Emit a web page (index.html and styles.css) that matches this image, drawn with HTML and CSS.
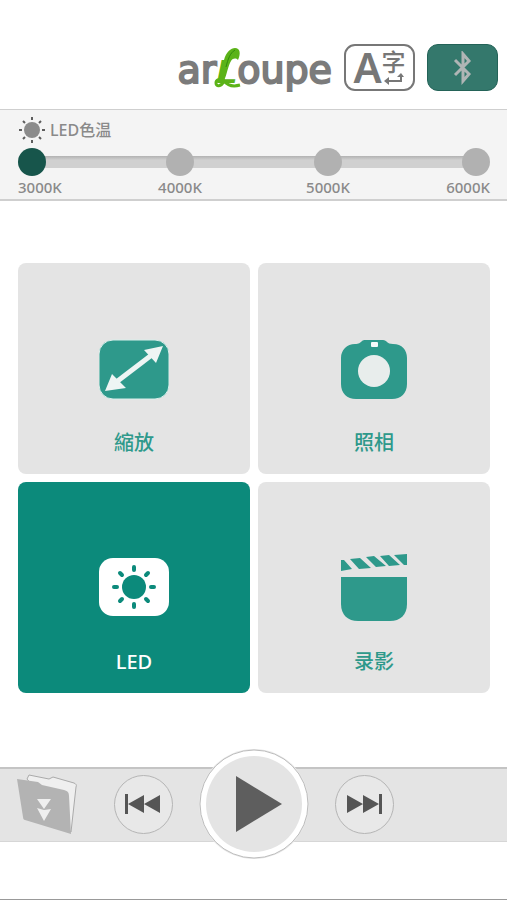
FILE: index.html
```html
<!DOCTYPE html>
<html lang="zh-Hant">
<head>
    <meta charset="UTF-8">
    <meta name="viewport" content="width=device-width, initial-scale=1.0">
    <title>arLoupe</title>
    <link rel="stylesheet" href="styles.css">
</head>
<body>

    <header class="header">
        <div class="logo">
            <span>ar</span><span class="logo__l">L<svg class="logo__leaf" viewBox="0 0 28 42" aria-hidden="true">
                <path d="M5 34C8 26 8 20 10 13 12 5 17 1 21 1c5 0 6 5 3 12-2-2-5-2-7 1-3 5-4 13-7 20z" fill="#5bb318"/>
                <path d="M12 20C14 12 16 6 21 3" fill="none" stroke="#2f8a0c" stroke-width="1"/>
                <path d="M9 34c-3-3-7-1-7 2 0 4 5 4 8-2 4 5 9 6 16 4" fill="none" stroke="#5bb318" stroke-width="3"/>
            </svg></span><span>oupe</span>
        </div>
        <button class="btn btn--lang" type="button" aria-label="A字">
            <span class="lang__a">A</span>
            <span class="lang__zi">
                <span>字</span>
                <svg width="20" height="12" viewBox="0 0 20 12" aria-hidden="true">
                    <path d="M17 3v5H4" fill="none" stroke="#777" stroke-width="2"/>
                    <path d="M0 8l5-4v8zM13 4l4-4 3 4z" fill="#777"/>
                </svg>
            </span>
        </button>
        <button class="btn btn--bt" type="button" aria-label="Bluetooth">
            <svg width="20" height="34" viewBox="0 0 20 34" aria-hidden="true">
                <path d="M2 9l14 14-6 7V3l6 7L2 24" fill="none" stroke="#b0b5b5" stroke-width="3"/>
            </svg>
        </button>
    </header>

    <fieldset class="temp">
        <div class="temp__title">
            <svg width="28" height="28" viewBox="0 0 28 28" aria-hidden="true">
                <circle cx="14" cy="14" r="8" fill="#8b8b8b"/>
                <path d="M14 1v3M14 24v3M1 14h3M24 14h3M5 5l2 2M21 21l2 2M5 23l2-2M21 7l2-2" stroke="#5d5d5d" stroke-width="2"/>
            </svg>
            <span>LED色温</span>
        </div>
        <div class="temp__stops">
            <label class="stop"><input type="radio" name="temp" value="3000" checked><span>3000K</span></label>
            <label class="stop"><input type="radio" name="temp" value="4000"><span>4000K</span></label>
            <label class="stop"><input type="radio" name="temp" value="5000"><span>5000K</span></label>
            <label class="stop"><input type="radio" name="temp" value="6000"><span>6000K</span></label>
        </div>
    </fieldset>

    <main class="grid">
        <button class="card" type="button">
            <svg class="card__icon" viewBox="0 0 70 70" aria-hidden="true">
                <rect x="0" y="6" width="70" height="59" rx="14" fill="#2e998b" stroke="#d8efeb" stroke-width="1"/>
                <path d="M16 49L54 20" stroke="#eef5f4" stroke-width="5"/>
                <path d="M6 57l7-17 14 14zM64 12L45 16l12 13z" fill="#eef5f4"/>
            </svg>
            <span>縮放</span>
        </button>
        <button class="card" type="button">
            <svg class="card__icon" viewBox="0 0 70 70" aria-hidden="true">
                <path d="M16 10c4 0 5-1 7-3 1-1 2-1 3-1h18c2 0 3 1 4 2 1 1 3 2 6 2 9 0 14 6 14 14v26c0 9-6 15-15 15H17C8 65 2 59 2 50V24c0-8 6-14 14-14z" fill="#2e998b"/>
                <circle cx="35" cy="37" r="16" fill="#e8edec"/>
                <rect x="32" y="8" width="7" height="5" rx="1" fill="#f5fafa"/>
            </svg>
            <span>照相</span>
        </button>
        <button class="card card--active" type="button">
            <svg class="card__icon" viewBox="0 0 70 70" aria-hidden="true">
                <rect x="0" y="5" width="70" height="58" rx="14" fill="#fff"/>
                <circle cx="35" cy="34" r="12" fill="#0c8a7b"/>
                <path d="M35 14v3M35 51v3M15 34h3M52 34h3M21 20l2 2M47 46l2 2M21 48l2-2M47 22l2-2" stroke="#0c8a7b" stroke-width="4" stroke-linecap="round"/>
            </svg>
            <span>LED</span>
        </button>
        <button class="card" type="button">
            <svg class="card__icon" viewBox="0 0 70 70" aria-hidden="true">
                <path d="M2 24h66v27c0 11-7 17-17 17H19C9 68 2 62 2 51z" fill="#2e998b"/>
                <path d="M2 7h3l8 9-11 2zM11 6l10-1 11 10-12 1zM27 4l8-1 12 10-10 1zM41 3l9-1 11 10-11 1zM55 2l13-1v11h-3z" fill="#2e998b"/>
            </svg>
            <span>录影</span>
        </button>
    </main>

    <footer class="player">
        <button class="folder" type="button" aria-label="Folder">
            <svg width="60" height="62" viewBox="0 0 60 62" aria-hidden="true">
                <path d="M10 6l2-4 20 4 4-2 21 6c2 1 3 2 2 4l-5 45z" fill="#efefef" stroke="#aaa" stroke-width="1"/>
                <path d="M0 6l21 3 4 3 22 5c4 1 5 3 5 6l2 38L8 47c-1 0-2-1-2-3z" fill="#b3b3b3"/>
                <path d="M20 26h14l-7 10zM20 35l7 2 7-1-7 12z" fill="#efefef"/>
            </svg>
        </button>
        <div class="player__controls">
            <button class="round" type="button" aria-label="Previous">
                <svg width="36" height="20" viewBox="0 0 36 20" aria-hidden="true">
                    <path d="M0 0h3v20H0zM19 1v18L3 10zM35 1v18l-16-9z" fill="#555"/>
                </svg>
            </button>
            <button class="round round--play" type="button" aria-label="Play">
                <svg width="110" height="110" viewBox="0 0 110 110" aria-hidden="true">
                    <circle cx="55" cy="55" r="54" fill="#fff" stroke="#bcbcbc" stroke-width="1"/>
                    <circle cx="55" cy="55" r="48" fill="#e4e4e4"/>
                    <path d="M37 27v56l46-28z" fill="#5e5e5e"/>
                </svg>
            </button>
            <button class="round" type="button" aria-label="Next">
                <svg width="36" height="20" viewBox="0 0 36 20" aria-hidden="true">
                    <path d="M1 1l16 9-16 9zM17 1l16 9-16 9zM33 0h3v20h-3z" fill="#555"/>
                </svg>
            </button>
        </div>
    </footer>

</body>
</html>
```
FILE: styles.css
```css
:root {
    --clr-green: #0c8a7b;
    --clr-label: #2e998b;
    --clr-grey: #e4e4e4;
    --clr-text: #8a8a8a;
}
* {
    margin: 0;
    box-sizing: border-box;
}
body {
    min-height: 100vh;
    font-family: "Noto Sans", "Noto Sans CJK TC", sans-serif;
    background: #fff;
    border-bottom: 1px solid #999;
}
button {
    padding: 0;
    border: 0;
    background: none;
    font-family: inherit;
    cursor: pointer;
}
svg {
    display: block;
}

.header {
    display: flex;
    justify-content: flex-end;
    align-items: center;
    gap: 12px;
    padding: 44px 9px 18px;
}
.logo {
    display: flex;
    align-items: baseline;
    height: 47px;
    font: 38px/52px "DejaVu Sans", sans-serif;
    color: #7b7b7b;
    -webkit-text-stroke: 2px #7b7b7b;
}
.logo__l {
    position: relative;
    font: italic bold 34px/47px "Liberation Sans", sans-serif;
    color: #5bb318;
    -webkit-text-stroke: 0;
}
.logo__leaf {
    position: absolute;
    left: -2px;
    bottom: 6px;
    width: 28px;
    height: 42px;
}
.btn {
    display: flex;
    justify-content: center;
    align-items: center;
    width: 71px;
    height: 47px;
    border-radius: 11px;
}
.btn--lang {
    padding-bottom: 2px;
    border: 2px solid #777;
    color: #777;
}
.lang__a {
    font: 600 42px/42px "Noto Sans", sans-serif;
}
.lang__zi {
    display: flex;
    flex-direction: column;
    align-items: center;
    font: 500 24px/24px "Noto Sans CJK TC", sans-serif;
}
.btn--bt {
    background: #34786c;
    border: 1px solid #246358;
}

.temp {
    display: grid;
    gap: 4px;
    min-width: 0;
    padding: 6px 17px 1px 18px;
    border: solid #cfcfcf;
    border-width: 1px 0 2px;
    background: #f4f4f4;
    color: var(--clr-text);
    font-size: 16px;
    font-weight: 500;
    line-height: 22px;
}
.temp__title {
    display: flex;
    align-items: center;
    gap: 4px;
}
.temp__stops {
    display: flex;
    justify-content: space-between;
    background: linear-gradient(#b2b2b2, #d0d0d0 4px) no-repeat center 8px / calc(100% - 28px) 12px;
}
.stop {
    display: flex;
    flex-direction: column;
    align-items: center;
    width: 28px;
    font-size: 15px;
}
.stop:first-child {
    align-items: flex-start;
}
.stop:last-child {
    align-items: flex-end;
}
.stop input {
    appearance: none;
    width: 28px;
    height: 28px;
    border-radius: 50%;
    background: #b1b1b1;
}
.stop input:checked {
    background: #17554b;
}

.grid {
    display: grid;
    grid-template-columns: 1fr 1fr;
    gap: 8px;
    padding: 62px 17px 74px 18px;
}
.card {
    display: flex;
    flex-direction: column;
    align-items: center;
    gap: 25px;
    aspect-ratio: 232 / 211;
    padding-top: 71px;
    border-radius: 8px;
    background: var(--clr-grey);
    color: var(--clr-label);
    font-size: 20px;
    font-weight: 500;
    line-height: 28px;
}
.card--active {
    background: var(--clr-green);
    color: #fff;
}
.card__icon {
    width: 70px;
    height: 70px;
}

.player {
    display: grid;
    grid-template-columns: 1fr auto 1fr;
    align-items: center;
    height: 75px;
    padding: 0 17px 3px;
    border-top: 2px solid #c4c4c4;
    border-bottom: 1px solid #d6d6d6;
    background: var(--clr-grey);
}
.folder {
    justify-self: start;
}
.player__controls {
    display: flex;
    align-items: center;
    gap: 26px;
    margin: -20px 0;
}
.round {
    display: grid;
    place-content: center;
    width: 59px;
    height: 59px;
    border: 1px solid #b5b5b5;
    border-radius: 50%;
    background: #e8e8e8;
}
.round--play {
    width: 110px;
    height: 110px;
    border: 0;
}
```
